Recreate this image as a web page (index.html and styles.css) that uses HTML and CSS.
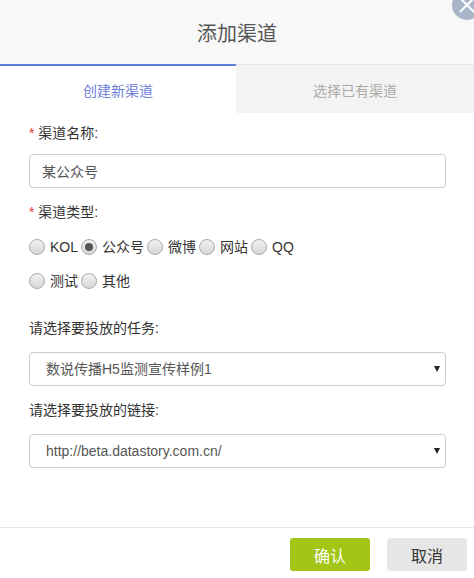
FILE: index.html
```html
<!DOCTYPE html>
<html lang="zh-CN">
<head>
    <meta charset="UTF-8">
    <meta name="viewport" content="width=device-width, initial-scale=1.0">
    <title>添加渠道</title>
    <link rel="stylesheet" href="styles.css">
</head>
<body>

    <div class="dialog">
        <!-- Header -->
        <header class="dialog-header">
            <h1>添加渠道</h1>
            <span class="close-btn"></span>
        </header>

        <!-- Tabs -->
        <div class="tabs">
            <div class="tab active">创建新渠道</div>
            <div class="tab">选择已有渠道</div>
        </div>

        <!-- Form -->
        <div class="channel-form">
            <label class="field-label" for="channelName"><span class="required">*</span> 渠道名称:</label>
            <input type="text" id="channelName" class="text-input" value="某公众号">

            <label class="field-label label-type"><span class="required">*</span> 渠道类型:</label>
            <div class="radio-row">
                <label class="radio-item"><input type="radio" name="type"> KOL</label>
                <label class="radio-item"><input type="radio" name="type" checked> 公众号</label>
                <label class="radio-item"><input type="radio" name="type"> 微博</label>
                <label class="radio-item"><input type="radio" name="type"> 网站</label>
                <label class="radio-item"><input type="radio" name="type"> QQ</label>
            </div>
            <div class="radio-row">
                <label class="radio-item"><input type="radio" name="type"> 测试</label>
                <label class="radio-item"><input type="radio" name="type"> 其他</label>
            </div>

            <label class="field-label label-task" for="task">请选择要投放的任务:</label>
            <div class="select-wrap">
                <select id="task" class="select-input">
                    <option>数说传播H5监测宣传样例1</option>
                </select>
            </div>

            <label class="field-label label-link" for="link">请选择要投放的链接:</label>
            <div class="select-wrap">
                <select id="link" class="select-input latin">
                    <option>http://beta.datastory.com.cn/</option>
                </select>
            </div>
        </div>

        <!-- Footer -->
        <footer class="dialog-footer">
            <button class="btn btn-confirm">确认</button>
            <button class="btn btn-cancel">取消</button>
        </footer>
    </div>

</body>
</html>
```

FILE: styles.css
```css
* {
    margin: 0;
    padding: 0;
    box-sizing: border-box;
}

body {
    font-family: "Liberation Sans", "Noto Sans CJK SC", sans-serif;
    font-size: 14px;
    color: #333;
    background: #fff;
    width: 474px;
    height: 578px;
    overflow: hidden;
}

.dialog {
    display: flex;
    flex-direction: column;
    height: 578px;
    position: relative;
}

.dialog-header {
    background: #f8f8f8;
    height: 64px;
    display: flex;
    align-items: center;
    justify-content: center;
    padding-top: 4px;
}

.dialog-header h1 {
    font-size: 20px;
    font-weight: normal;
    color: #555;
    line-height: 24px;
}

.close-btn {
    position: absolute;
    top: -10px;
    left: 452px;
    width: 30px;
    height: 30px;
    border-radius: 50%;
    background: #a9b6c8;
}

.close-btn::before,
.close-btn::after {
    content: "";
    position: absolute;
    left: 5px;
    top: 14px;
    width: 20px;
    height: 2px;
    background: #fff;
    transform: rotate(45deg);
}

.close-btn::after {
    transform: rotate(-45deg);
}

.tabs {
    display: flex;
    height: 49px;
}

.tab {
    flex: 0 0 238px;
    display: flex;
    align-items: center;
    justify-content: center;
    background: #f3f3f3;
    border-top: 1px solid #e3e3e3;
    color: #aaa;
    padding-top: 2px;
}

.tab.active {
    flex: 0 0 236px;
    background: #fff;
    border-top: 2px solid #5f80dc;
    color: #6b80d6;
    padding-top: 0;
}

.channel-form {
    padding: 10px 28px 0 29px;
    display: flex;
    flex-direction: column;
    flex: 1;
}

.field-label {
    display: block;
    line-height: 20px;
    color: #333;
}

.required {
    color: #e53935;
}

.text-input {
    margin-top: 11px;
    height: 34px;
    width: 100%;
    border: 1px solid #ccc;
    border-radius: 4px;
    padding: 0 12px;
    font-family: "Noto Sans CJK SC", sans-serif;
    font-size: 14px;
    color: #555;
    outline: none;
}

.label-type {
    margin-top: 14px;
}

.radio-row {
    display: flex;
    gap: 3px;
    margin-top: 15px;
    line-height: 20px;
}

.radio-row + .radio-row {
    margin-top: 14px;
}

.radio-item {
    display: flex;
    align-items: center;
    gap: 5px;
    color: #333;
}

.radio-item input {
    appearance: none;
    -webkit-appearance: none;
    width: 16px;
    height: 16px;
    border-radius: 50%;
    border: 1px solid #a9a9a9;
    background: linear-gradient(#f2f2f2, #d6d6d6);
    position: relative;
    margin: 0;
}

.radio-item input:checked::after {
    content: "";
    position: absolute;
    left: 3px;
    top: 3px;
    width: 8px;
    height: 8px;
    border-radius: 50%;
    background: #555;
}

.label-task {
    margin-top: 27px;
}

.label-link {
    margin-top: 14px;
}

.select-wrap {
    position: relative;
    margin-top: 14px;
}

.select-wrap::after {
    content: "";
    position: absolute;
    right: 6px;
    top: 14px;
    border-left: 3px solid transparent;
    border-right: 3px solid transparent;
    border-top: 6px solid #222;
}

.select-input {
    appearance: none;
    -webkit-appearance: none;
    width: 100%;
    height: 34px;
    border: 1px solid #ccc;
    border-radius: 4px;
    background: #fff;
    padding: 0 14px 0 16px;
    font-family: "Liberation Sans", "Noto Sans CJK SC", sans-serif;
    font-size: 14px;
    color: #555;
    outline: none;
}

.dialog-footer {
    border-top: 1px solid #e5e5e5;
    height: 51px;
    display: flex;
    justify-content: flex-end;
    align-items: flex-start;
    gap: 17px;
    padding: 10px 7px 0 0;
}

.btn {
    width: 80px;
    height: 33px;
    border: none;
    border-radius: 3px;
    font-family: "Noto Sans CJK SC", sans-serif;
    font-size: 16px;
    cursor: pointer;
}

.btn-confirm {
    background: #a2c516;
    color: #fff;
}

.btn-cancel {
    background: #e6e6e6;
    color: #333;
}
```
